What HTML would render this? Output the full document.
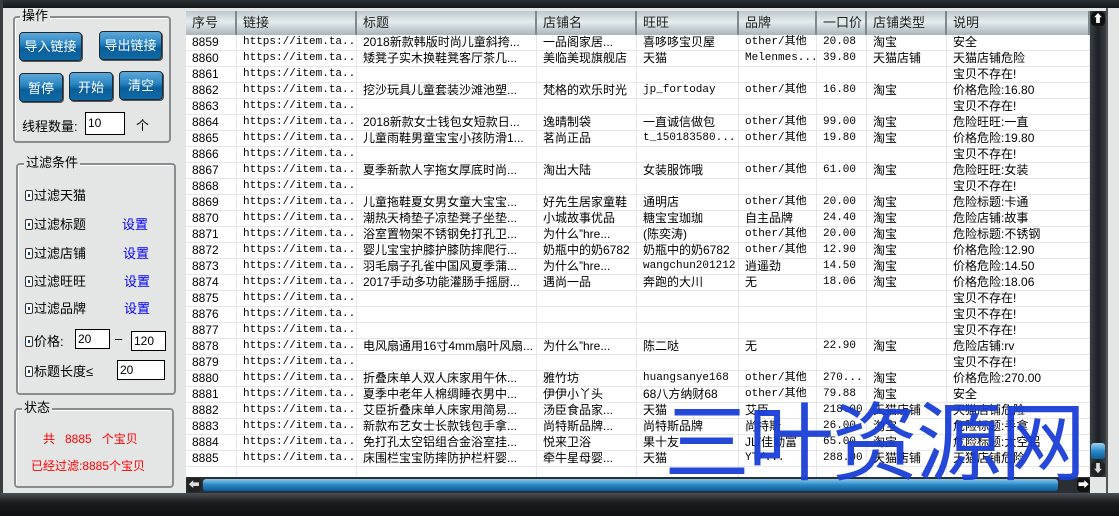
<!DOCTYPE html>
<html><head><meta charset="utf-8"><style>
*{margin:0;padding:0;box-sizing:border-box}
body{width:1119px;height:516px;overflow:hidden;background:#e4e5e5;font-family:"Liberation Sans","Noto Sans CJK SC",sans-serif;font-size:12px;color:#000;position:relative}
.abs{position:absolute}
.top{left:0;top:0;width:1119px;height:8px;background:linear-gradient(#2a2f33,#15191c)}
.lb{left:0;top:0;width:3px;height:516px;background:#3a3d40}
.bot{left:0;top:493px;width:1119px;height:23px;background:linear-gradient(#4a5055,#1a1e21 40%,#0d1012)}
.grp{border:2px solid #8a8d8f;border-radius:4px;box-shadow:inset 1px 1px 0 #fff}
.gt{background:#e4e5e5;padding:0 2px;font-size:13px;line-height:14px}
.btn{border-radius:4px;border:1px solid #1e2a33;background:linear-gradient(#5fa8d8 0,#2a86c4 40%,#0b5e98 60%,#0d6aa8 100%);color:#fff;font-size:13px;text-align:center;box-shadow:1px 1px 0 #555}
.inp{background:#fff;border:1px solid #000;font-size:12px;padding-left:2px;line-height:19px}
.cb{width:8px;height:11px;border:1px solid #333;border-radius:2px;display:inline-block;position:relative;top:1px;margin-right:1px;background:#fff}
.cb:after{content:"";position:absolute;left:2px;top:3px;width:2px;height:3px;background:#0b4d8a}
.blue{color:#0000ff}
.tbl{left:186px;top:11px;width:904px;height:466px;background:#fff;overflow:hidden}
.hd{position:absolute;left:0;top:0;height:24px;width:904px;background:linear-gradient(#bdc8cb,#e4ecee 45%,#a9b6ba);display:flex;font-size:13px;color:#222}
.hd span{border-right:2px solid #7d8a8e;padding-left:6px;line-height:24px;height:24px}
.r{position:absolute;left:0;height:16px;width:904px;display:flex;border-bottom:1px solid #e6e8e8;line-height:15px;white-space:nowrap}
.r span{border-right:1px solid #e6e8e8;padding-left:6px;overflow:hidden;height:15px}
.m{font-family:"Liberation Mono","Noto Sans CJK SC",monospace;font-size:11px}
.c1{width:51px}.c2{width:120px}.c3{width:180px}.c4{width:100px}.c5{width:102px}.c6{width:78px}.c7{width:50px}.c8{width:80px}.c9{width:143px}
.vs{left:1090px;top:11px;width:16px;height:466px;background:linear-gradient(90deg,#3a4044,#1c2024,#3a4044)}
.hs{left:186px;top:477px;width:904px;height:16px;background:#2a2f33}
.rt{left:1106px;top:8px;width:13px;height:485px;background:#e4e5e5;border-left:2px solid #555}
.wm{left:664px;top:376px;font-size:86px;color:#1a3fd6;font-family:"Noto Sans CJK SC",sans-serif;letter-spacing:-2px;line-height:120px;opacity:.95}
</style></head><body>
<div class="abs top"></div>
<div class="abs lb"></div>

<div class="abs grp" style="left:13px;top:16px;width:158px;height:127px"></div>
<div class="abs gt" style="left:20px;top:9px">操作</div>
<div class="abs btn" style="left:19px;top:32px;width:63px;height:29px;line-height:27px">导入链接</div>
<div class="abs btn" style="left:99px;top:31px;width:63px;height:29px;line-height:27px">导出链接</div>
<div class="abs btn" style="left:19px;top:73px;width:44px;height:29px;line-height:29px">暂停</div>
<div class="abs btn" style="left:69px;top:72px;width:44px;height:29px;line-height:29px">开始</div>
<div class="abs btn" style="left:119px;top:71px;width:44px;height:29px;line-height:27px">清空</div>
<div class="abs" style="left:22px;top:116px;font-size:13px">线程数量:</div>
<div class="abs inp" style="left:85px;top:112px;width:40px;height:23px;line-height:21px">10</div>
<div class="abs" style="left:136px;top:115px;font-size:13px">个</div>

<div class="abs grp" style="left:16px;top:163px;width:160px;height:232px"></div>
<div class="abs gt" style="left:24px;top:156px">过滤条件</div>
<div class="abs" style="left:25px;top:185px;font-size:13px"><i class="cb"></i>过滤天猫</div>
<div class="abs" style="left:25px;top:214px;font-size:13px"><i class="cb"></i>过滤标题</div>
<div class="abs blue" style="left:122px;top:214px;font-size:13px">设置</div>
<div class="abs" style="left:25px;top:243px;font-size:13px"><i class="cb"></i>过滤店铺</div>
<div class="abs blue" style="left:123px;top:243px;font-size:13px">设置</div>
<div class="abs" style="left:25px;top:271px;font-size:13px"><i class="cb"></i>过滤旺旺</div>
<div class="abs blue" style="left:124px;top:271px;font-size:13px">设置</div>
<div class="abs" style="left:25px;top:298px;font-size:13px"><i class="cb"></i>过滤品牌</div>
<div class="abs blue" style="left:124px;top:298px;font-size:13px">设置</div>
<div class="abs" style="left:25px;top:331px;font-size:13px"><i class="cb"></i>价格:</div>
<div class="abs inp" style="left:75px;top:329px;width:35px;height:20px">20</div>
<div class="abs" style="left:115px;top:331px;font-size:13px">–</div>
<div class="abs inp" style="left:131px;top:331px;width:35px;height:20px">120</div>
<div class="abs" style="left:25px;top:361px;font-size:13px"><i class="cb"></i>标题长度≤</div>
<div class="abs inp" style="left:117px;top:360px;width:48px;height:20px">20</div>

<div class="abs grp" style="left:14px;top:408px;width:160px;height:80px"></div>
<div class="abs gt" style="left:22px;top:401px">状态</div>
<div class="abs" style="left:43px;top:430px;color:#f00;font-size:12px">共&nbsp;&nbsp;&nbsp;8885&nbsp;&nbsp;&nbsp;个宝贝</div>
<div class="abs" style="left:31px;top:457px;color:#f00;font-size:12px">已经过滤:8885个宝贝</div>

<div class="abs tbl">
<div class="hd"><span class="c1">序号</span><span class="c2">链接</span><span class="c3">标题</span><span class="c4">店铺名</span><span class="c5">旺旺</span><span class="c6">品牌</span><span class="c7">一口价</span><span class="c8">店铺类型</span><span class="c9">说明</span></div>
<div class="r" style="top:24px"><span class="c1">8859</span><span class="c2 m">https://item.ta...</span><span class="c3">2018新款韩版时尚儿童斜挎...</span><span class="c4">一品阁家居...</span><span class="c5">喜哆哆宝贝屋</span><span class="c6 m">other/其他</span><span class="c7 m">20.08</span><span class="c8">淘宝</span><span class="c9">安全</span></div>
<div class="r" style="top:40px"><span class="c1">8860</span><span class="c2 m">https://item.ta...</span><span class="c3">矮凳子实木换鞋凳客厅茶几...</span><span class="c4">美临美现旗舰店</span><span class="c5">天猫</span><span class="c6 m">Melenmes...</span><span class="c7 m">39.80</span><span class="c8">天猫店铺</span><span class="c9">天猫店铺危险</span></div>
<div class="r" style="top:56px"><span class="c1">8861</span><span class="c2 m">https://item.ta...</span><span class="c3"></span><span class="c4"></span><span class="c5"></span><span class="c6"></span><span class="c7"></span><span class="c8"></span><span class="c9">宝贝不存在!</span></div>
<div class="r" style="top:72px"><span class="c1">8862</span><span class="c2 m">https://item.ta...</span><span class="c3">挖沙玩具儿童套装沙滩池塑...</span><span class="c4">梵格的欢乐时光</span><span class="c5 m">jp_fortoday</span><span class="c6 m">other/其他</span><span class="c7 m">16.80</span><span class="c8">淘宝</span><span class="c9">价格危险:16.80</span></div>
<div class="r" style="top:88px"><span class="c1">8863</span><span class="c2 m">https://item.ta...</span><span class="c3"></span><span class="c4"></span><span class="c5"></span><span class="c6"></span><span class="c7"></span><span class="c8"></span><span class="c9">宝贝不存在!</span></div>
<div class="r" style="top:104px"><span class="c1">8864</span><span class="c2 m">https://item.ta...</span><span class="c3">2018新款女士钱包女短款日...</span><span class="c4">逸晴制袋</span><span class="c5">一直诚信做包</span><span class="c6 m">other/其他</span><span class="c7 m">99.00</span><span class="c8">淘宝</span><span class="c9">危险旺旺:一直</span></div>
<div class="r" style="top:120px"><span class="c1">8865</span><span class="c2 m">https://item.ta...</span><span class="c3">儿童雨鞋男童宝宝小孩防滑1...</span><span class="c4">茗尚正品</span><span class="c5 m">t_150183580...</span><span class="c6 m">other/其他</span><span class="c7 m">19.80</span><span class="c8">淘宝</span><span class="c9">价格危险:19.80</span></div>
<div class="r" style="top:136px"><span class="c1">8866</span><span class="c2 m">https://item.ta...</span><span class="c3"></span><span class="c4"></span><span class="c5"></span><span class="c6"></span><span class="c7"></span><span class="c8"></span><span class="c9">宝贝不存在!</span></div>
<div class="r" style="top:152px"><span class="c1">8867</span><span class="c2 m">https://item.ta...</span><span class="c3">夏季新款人字拖女厚底时尚...</span><span class="c4">淘出大陆</span><span class="c5">女装服饰哦</span><span class="c6 m">other/其他</span><span class="c7 m">61.00</span><span class="c8">淘宝</span><span class="c9">危险旺旺:女装</span></div>
<div class="r" style="top:168px"><span class="c1">8868</span><span class="c2 m">https://item.ta...</span><span class="c3"></span><span class="c4"></span><span class="c5"></span><span class="c6"></span><span class="c7"></span><span class="c8"></span><span class="c9">宝贝不存在!</span></div>
<div class="r" style="top:184px"><span class="c1">8869</span><span class="c2 m">https://item.ta...</span><span class="c3">儿童拖鞋夏女男女童大宝宝...</span><span class="c4">好先生居家童鞋</span><span class="c5">通明店</span><span class="c6 m">other/其他</span><span class="c7 m">20.00</span><span class="c8">淘宝</span><span class="c9">危险标题:卡通</span></div>
<div class="r" style="top:200px"><span class="c1">8870</span><span class="c2 m">https://item.ta...</span><span class="c3">潮热天椅垫子凉垫凳子坐垫...</span><span class="c4">小城故事优品</span><span class="c5">糖宝宝珈珈</span><span class="c6">自主品牌</span><span class="c7 m">24.40</span><span class="c8">淘宝</span><span class="c9">危险店铺:故事</span></div>
<div class="r" style="top:216px"><span class="c1">8871</span><span class="c2 m">https://item.ta...</span><span class="c3">浴室置物架不锈钢免打孔卫...</span><span class="c4">为什么”hre...</span><span class="c5">(陈奕涛)</span><span class="c6 m">other/其他</span><span class="c7 m">20.00</span><span class="c8">淘宝</span><span class="c9">危险标题:不锈钢</span></div>
<div class="r" style="top:232px"><span class="c1">8872</span><span class="c2 m">https://item.ta...</span><span class="c3">婴儿宝宝护膝护膝防摔爬行...</span><span class="c4">奶瓶中的奶6782</span><span class="c5">奶瓶中的奶6782</span><span class="c6 m">other/其他</span><span class="c7 m">12.90</span><span class="c8">淘宝</span><span class="c9">价格危险:12.90</span></div>
<div class="r" style="top:248px"><span class="c1">8873</span><span class="c2 m">https://item.ta...</span><span class="c3">羽毛扇子孔雀中国风夏季蒲...</span><span class="c4">为什么”hre...</span><span class="c5 m">wangchun201212</span><span class="c6">逍遥劲</span><span class="c7 m">14.50</span><span class="c8">淘宝</span><span class="c9">价格危险:14.50</span></div>
<div class="r" style="top:264px"><span class="c1">8874</span><span class="c2 m">https://item.ta...</span><span class="c3">2017手动多功能灌肠手摇厨...</span><span class="c4">遇尚一品</span><span class="c5">奔跑的大川</span><span class="c6">无</span><span class="c7 m">18.06</span><span class="c8">淘宝</span><span class="c9">价格危险:18.06</span></div>
<div class="r" style="top:280px"><span class="c1">8875</span><span class="c2 m">https://item.ta...</span><span class="c3"></span><span class="c4"></span><span class="c5"></span><span class="c6"></span><span class="c7"></span><span class="c8"></span><span class="c9">宝贝不存在!</span></div>
<div class="r" style="top:296px"><span class="c1">8876</span><span class="c2 m">https://item.ta...</span><span class="c3"></span><span class="c4"></span><span class="c5"></span><span class="c6"></span><span class="c7"></span><span class="c8"></span><span class="c9">宝贝不存在!</span></div>
<div class="r" style="top:312px"><span class="c1">8877</span><span class="c2 m">https://item.ta...</span><span class="c3"></span><span class="c4"></span><span class="c5"></span><span class="c6"></span><span class="c7"></span><span class="c8"></span><span class="c9">宝贝不存在!</span></div>
<div class="r" style="top:328px"><span class="c1">8878</span><span class="c2 m">https://item.ta...</span><span class="c3">电风扇通用16寸4mm扇叶风扇...</span><span class="c4">为什么”hre...</span><span class="c5">陈二哒</span><span class="c6">无</span><span class="c7 m">22.90</span><span class="c8">淘宝</span><span class="c9">危险店铺:rv</span></div>
<div class="r" style="top:344px"><span class="c1">8879</span><span class="c2 m">https://item.ta...</span><span class="c3"></span><span class="c4"></span><span class="c5"></span><span class="c6"></span><span class="c7"></span><span class="c8"></span><span class="c9">宝贝不存在!</span></div>
<div class="r" style="top:360px"><span class="c1">8880</span><span class="c2 m">https://item.ta...</span><span class="c3">折叠床单人双人床家用午休...</span><span class="c4">雅竹坊</span><span class="c5 m">huangsanye168</span><span class="c6 m">other/其他</span><span class="c7 m">270...</span><span class="c8">淘宝</span><span class="c9">价格危险:270.00</span></div>
<div class="r" style="top:376px"><span class="c1">8881</span><span class="c2 m">https://item.ta...</span><span class="c3">夏季中老年人棉绸睡衣男中...</span><span class="c4">伊伊小丫头</span><span class="c5">68八方纳财68</span><span class="c6 m">other/其他</span><span class="c7 m">79.88</span><span class="c8">淘宝</span><span class="c9">安全</span></div>
<div class="r" style="top:392px"><span class="c1">8882</span><span class="c2 m">https://item.ta...</span><span class="c3">艾臣折叠床单人床家用简易...</span><span class="c4">汤臣食品家...</span><span class="c5">天猫</span><span class="c6">艾臣</span><span class="c7 m">218.00</span><span class="c8">天猫店铺</span><span class="c9">天猫店铺危险</span></div>
<div class="r" style="top:408px"><span class="c1">8883</span><span class="c2 m">https://item.ta...</span><span class="c3">新款布艺女士长款钱包手拿...</span><span class="c4">尚特斯品牌...</span><span class="c5">尚特斯品牌</span><span class="c6">尚特斯</span><span class="c7 m">26.00</span><span class="c8">淘宝</span><span class="c9">危险标题:手拿</span></div>
<div class="r" style="top:424px"><span class="c1">8884</span><span class="c2 m">https://item.ta...</span><span class="c3">免打孔太空铝组合金浴室挂...</span><span class="c4">悦来卫浴</span><span class="c5">果十友</span><span class="c6">JL/佳勤富</span><span class="c7 m">65.00</span><span class="c8">淘宝</span><span class="c9">危险标题:太空铝</span></div>
<div class="r" style="top:440px"><span class="c1">8885</span><span class="c2 m">https://item.ta...</span><span class="c3">床围栏宝宝防摔防护栏杆婴...</span><span class="c4">牵牛星母婴...</span><span class="c5">天猫</span><span class="c6 m">YT/...</span><span class="c7 m">288.00</span><span class="c8">天猫店铺</span><span class="c9">天猫店铺危险</span></div>
<div class="r" style="top:456px;border:0"><span class="c1"></span><span class="c2"></span><span class="c3"></span><span class="c4"></span><span class="c5"></span><span class="c6"></span><span class="c7"></span><span class="c8"></span><span class="c9"></span></div>
</div>

<div class="abs vs"></div>
<div class="abs" style="left:1091px;top:12px;width:14px;height:14px;border-radius:4px;background:#111;color:#fff;font-size:11px;text-align:center;line-height:14px">⬆</div>
<div class="abs" style="left:1091px;top:443px;width:14px;height:16px;border-radius:3px;background:linear-gradient(#9fd3f0,#2a8acb 50%,#0b5e98)"></div>
<div class="abs" style="left:1091px;top:462px;width:14px;height:14px;border-radius:4px;background:#222;color:#ddd;font-size:11px;text-align:center;line-height:14px">⬇</div>
<div class="abs rt"></div>
<div class="abs hs"></div>
<div class="abs" style="left:187px;top:478px;width:14px;height:14px;border-radius:4px;background:#222;color:#ddd;font-size:11px;text-align:center;line-height:14px">⬅</div>
<div class="abs" style="left:203px;top:479px;width:855px;height:12px;border-radius:3px;background:linear-gradient(#8cc8ec,#2a86c4 50%,#0b5e98)"></div>
<div class="abs" style="left:1077px;top:478px;width:13px;height:14px;border-radius:4px;background:#111;color:#fff;font-size:11px;text-align:center;line-height:14px">➡</div>
<div class="abs bot"></div>
<div class="abs wm">三叶资源网</div>
</body></html>
